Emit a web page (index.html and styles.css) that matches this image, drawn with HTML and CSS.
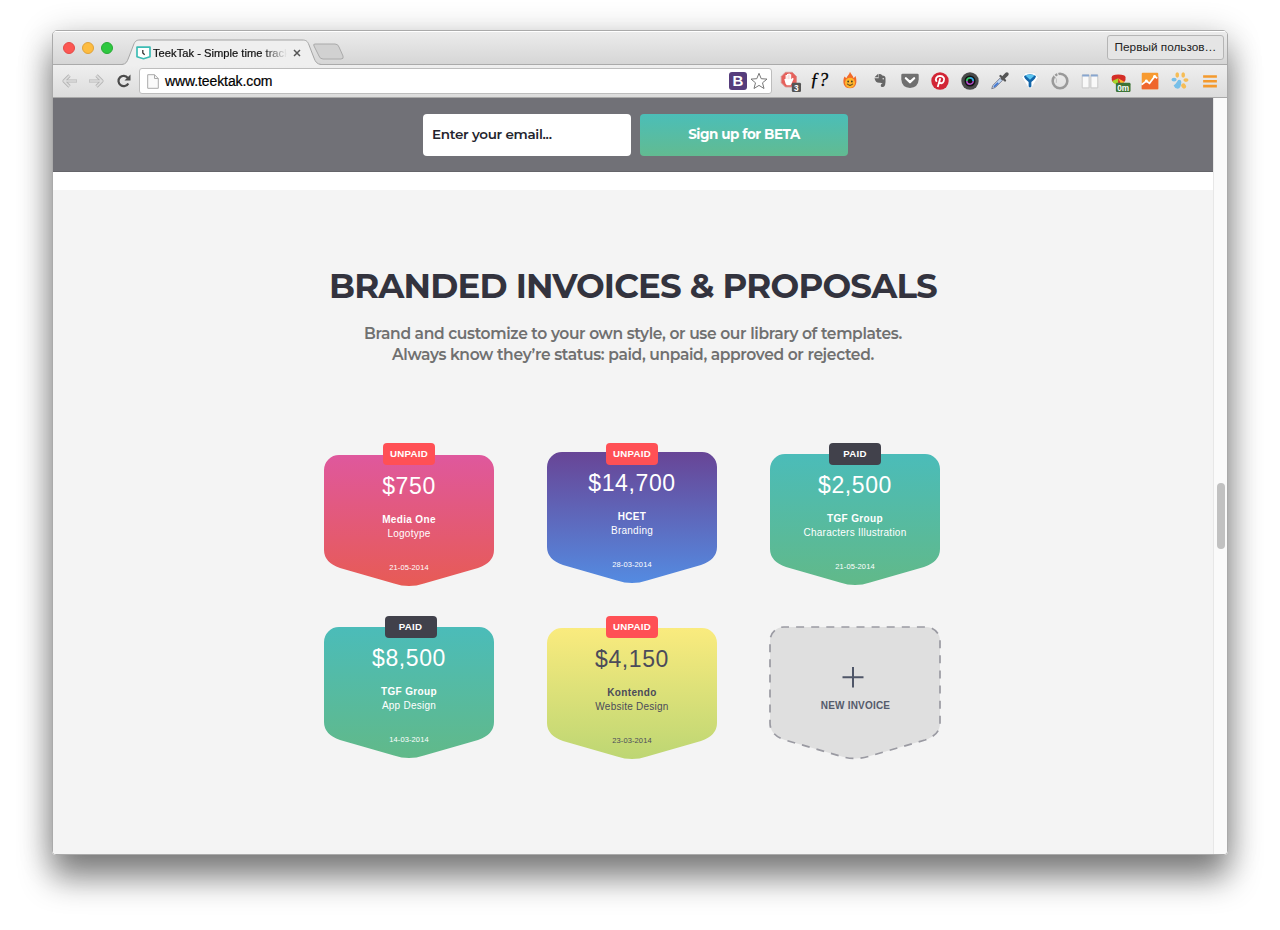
FILE: index.html
```html
<!DOCTYPE html>
<html lang="en">
<head>
<meta charset="utf-8">
<title>TeekTak - Simple time tracking</title>
<link rel="stylesheet" href="styles.css">
</head>
<body>
<div class="window">
  <header class="titlebar">
    <div class="lights"><i class="light close"></i><i class="light minimize"></i><i class="light maximize"></i></div>
    <div class="tab">
      <svg class="tab-shape" width="220" height="26" viewBox="0 0 220 26">
        <path d="M0 25.500C4 25 5 23 6.500 19L11.500 6C13 2 14.500 1 18 1H180C184 1 185.500 2 187 6L192 19C193.500 23 195 25 199 25.500V26H0Z" fill="#efefef"/>
        <path d="M0 25.500C4 25 5 23 6.500 19L11.500 6C13 2 14.500 1 18 1H180C184 1 185.500 2 187 6L192 19C193.500 23 195 25 199 25.500" fill="none" stroke="#a5a5a5"/>
        <path d="M193 5H213Q216 5 217 8L221 17Q222 20 219 20H201Q198 20 197 17L192 7Q191 5 193 5Z" fill="#d1d1d1" stroke="#aaa"/>
      </svg>
      <svg class="favicon" width="15" height="14" viewBox="0 0 15 14"><path d="M1 1.200H14V10.800L7.500 12.700L1 10.800Z" fill="#fff" stroke="#3dbcb4" stroke-width="1.700" stroke-linejoin="round"/><path d="M6.800 4V7L8.700 8.700" fill="none" stroke="#333" stroke-width="1.300"/></svg>
      <span class="tab-title">TeekTak - Simple time track</span>
      <svg class="tab-close" width="8" height="8" viewBox="0 0 8 8"><path d="M1 1L7 7M7 1L1 7" stroke="#555" stroke-width="1.500"/></svg>
    </div>
    <div class="user">Первый пользов…</div>
  </header>

  <div class="toolbar">
    <svg class="nav" width="76" height="18" viewBox="0 0 76 18">
      <g fill="none" stroke="#b5b5b5" stroke-width="3.200" stroke-linejoin="round"><path d="M8.500 3.500L3 9L8.500 14.500M3.500 9H16M35.500 3.500L41 9L35.500 14.500M40.500 9H28"/></g>
      <g fill="none" stroke="#dedede" stroke-width="1.500"><path d="M8.500 3.500L3 9L8.500 14.500M3.500 9H15.500M35.500 3.500L41 9L35.500 14.500M40.500 9H28.500"/></g>
      <path d="M66.800 5.800A5.200 5.200 0 1 0 67.300 11.400" fill="none" stroke="#4b4b4b" stroke-width="2.200"/><path d="M69.500 2.500V8.500H63.500Z" fill="#4b4b4b"/>
    </svg>
    <div class="address">
      <svg width="12" height="15" viewBox="0 0 12 15"><path d="M.700 .700H7.500L11.300 4.500V14.300H.700Z" fill="#fafafa" stroke="#aaa"/><path d="M7.500 .700V4.500H11.300" fill="none" stroke="#aaa"/></svg>
      <span class="url">www.teektak.com</span>
      <b class="bootstrap">B</b>
      <svg width="18" height="18" viewBox="0 0 18 18"><path d="M9 1.300L11.200 6.700L17 7.100L12.500 10.800L14 16.500L9 13.400L4 16.500L5.500 10.800L1 7.100L6.800 6.700Z" fill="#fff" stroke="#777"/></svg>
    </div>
    <div class="extensions">
      <svg viewBox="0 0 24 24"><path d="M7 2.500H14.500L19 7V14L14.500 18.500H7L2.500 14V7Z" fill="#e6605b" stroke="#d9908d"/><path d="M7.200 15L5.800 10L7.200 9.500V5.500H8.700V4.300H10.300V3.800H11.700V4.500H13.300V10L15 8.500L16 9.500L13.300 15.500L12.500 16.500H8.500Z" fill="#fff"/><path d="M8.700 6V10M10.300 5V10M11.800 5.500V10" stroke="#efb0ad" stroke-width=".5"/><rect x="14" y="14" width="10" height="10" rx="1.500" fill="#555"/><text x="19" y="22.500" class="badge-text">3</text></svg>
      <svg viewBox="0 0 24 24"><text x="11" y="17" class="fontface">ƒ?</text></svg>
      <svg viewBox="0 0 24 24"><path d="M12 2C13 5 15.500 6 16 9L18 6.500C20 12 19.500 20 12 20C4.500 20 3.500 12 6 7L8 9C9 6 11.500 5 12 2Z" fill="#f26a28"/><circle cx="12" cy="14" r="5.500" fill="#ffb52e"/><circle cx="10" cy="12.500" r="1" fill="#442"/><circle cx="14" cy="12.500" r="1" fill="#442"/><path d="M8.800 15Q12 18.500 15.200 15" fill="none" stroke="#542" stroke-width="1.200"/></svg>
      <svg viewBox="0 0 24 24"><path d="M6 8L10 4V8ZM10.500 4.500Q13 4 14.500 6Q18 6 18 9Q18.500 18 15.500 18.500Q12.500 19 12.800 16.500Q13 15 15 15Q13 13.500 11 14Q7 14 6 9H10.500Z" fill="#666"/><circle cx="15.500" cy="9.500" r=".8" fill="#eee"/></svg>
      <svg viewBox="0 0 24 24"><path d="M4 4H20Q21.500 4 21.500 5.500V10Q21 19 12 19.500Q3 19 2.500 10V5.500Q2.500 4 4 4Z" fill="#707070"/><path d="M7.500 9L12 13.300L16.500 9" fill="none" stroke="#fff" stroke-width="2.500" stroke-linecap="round" stroke-linejoin="round"/></svg>
      <svg viewBox="0 0 24 24"><circle cx="12" cy="12" r="9.500" fill="#d22535"/><path d="M8.500 12.800C6 9.500 8.500 6.500 12 6.500C16 6.500 17.500 9.500 16 12.500C14.500 15.500 12 14.500 11.500 13M12.300 9L9.500 18.500" fill="none" stroke="#fff" stroke-width="2"/></svg>
      <svg viewBox="0 0 24 24"><circle cx="12" cy="12" r="9.500" fill="#4a4a4a"/><circle cx="12" cy="12" r="6" fill="#111"/><path d="M8.500 12A3.500 3.500 0 0 1 12 8.500" fill="none" stroke="#33c36a" stroke-width="2"/><path d="M12 8.500A3.500 3.500 0 0 1 15.500 12" fill="none" stroke="#32a9e2" stroke-width="2"/><path d="M15.500 12A3.500 3.500 0 0 1 8.500 12" fill="none" stroke="#b04bc8" stroke-width="1.600"/></svg>
      <svg viewBox="0 0 24 24"><path d="M3 20.500L4 17L12 9L14.500 11.500L7 19Z" fill="#bcd6f4" stroke="#778"/><path d="M5.500 18.500L10 14" stroke="#4176cf" stroke-width="2"/><path d="M12.500 6.500L17.500 11.500" stroke="#555" stroke-width="2.500" stroke-linecap="round"/><path d="M15 9L19.500 4.500" stroke="#555" stroke-width="4" stroke-linecap="round"/></svg>
      <svg viewBox="0 0 24 24"><path d="M7 3H17L21 8L13.500 20H10.500L3 8Z" fill="#fff" stroke="#e2e2e2"/><path d="M5.500 6.500Q12 3 18.500 6.500Q18.500 9 13.500 13V18Q12 20 10.500 18V13Q5.500 9 5.500 6.500Z" fill="#1466a9"/><path d="M7 6Q12 4 17 6L12 10.500Z" fill="#5cc5f0"/></svg>
      <svg viewBox="0 0 24 24"><circle cx="12" cy="12" r="8" fill="none" stroke="#999" stroke-width="2.800"/><path d="M5 4.500L9 10M9 2.500L10.500 7" stroke="#e8e8e8" stroke-width="1.200"/><path d="M6.500 7.500Q9 9.500 8 14" fill="none" stroke="#bbb"/></svg>
      <svg viewBox="0 0 24 24"><path d="M3.500 5.500H11V19.500H3.500ZM13 5.500H20.500V19.500H13Z" fill="#f9f9f9" stroke="#c4c4c4"/><path d="M3.500 6H11M13 6H20.500" stroke="#87a6cf" stroke-width="2"/></svg>
      <svg viewBox="0 0 24 24"><path d="M3 8Q3 5 10 5Q18 5 18 8V11Q17 15 10 15Q4 15 3 11Z" fill="#d42e27"/><path d="M10 9L3.500 12Q5 15.500 10 15.500Z" fill="#a6d62b"/><path d="M10 9L13 15L17 13Z" fill="#ffb82c"/><rect x="7.500" y="14" width="16" height="10" rx="1.500" fill="#3c7437"/><text x="15.500" y="22.500" class="badge-text">0m</text></svg>
      <svg viewBox="0 0 24 24"><rect x="3" y="3" width="18" height="18" rx="1" fill="#f79a30"/><path d="M3 17L8 12L11 15L16 10L21 7V21H3Z" fill="#ef672c"/><path d="M3 16L8 12L11.500 14.500L17 7L20 9" fill="none" stroke="#fff" stroke-width="1.800"/><circle cx="8" cy="12" r="1.600" fill="#fff"/><circle cx="17" cy="7" r="1.600" fill="#fff"/></svg>
      <svg viewBox="0 0 24 24"><g fill="#f6bd56"><ellipse cx="9" cy="5.500" rx="2" ry="3"/><ellipse cx="15.500" cy="5.500" rx="2" ry="3"/><ellipse cx="18.500" cy="11" rx="2.800" ry="2"/><ellipse cx="16" cy="17.500" rx="2.400" ry="3" transform="rotate(-35 16 17.500)"/></g><g fill="#77bfe8"><ellipse cx="5.500" cy="10.500" rx="2.800" ry="2"/><path d="M10 11Q13 10 13.500 13Q13 20 9.500 20.500Q6 20 5 17Q7 16 10 11Z"/></g></svg>
      <svg viewBox="0 0 24 24"><path d="M4.500 7H19.500M4.500 12.300H19.500M4.500 17.600H19.500" stroke="#f49a2e" stroke-width="2.800"/></svg>
    </div>
  </div>

  <div class="viewport">
    <main class="page">
      <form class="signup">
        <div class="email">Enter your email...</div>
        <div class="signup-button">Sign up for BETA</div>
      </form>
      <section class="invoices">
        <h1>BRANDED INVOICES &amp; PROPOSALS</h1>
        <p class="lead">Brand and customize to your own style, or use our library of templates.<br>Always know they’re status: paid, unpaid, approved or rejected.</p>
        <div class="cards">
          <article class="card pink"><span class="status">UNPAID</span><div class="shape"><div class="price">$750</div><div class="client">Media One</div><div class="job">Logotype</div><div class="date">21-05-2014</div></div></article>
          <article class="card purple"><span class="status">UNPAID</span><div class="shape"><div class="price">$14,700</div><div class="client">HCET</div><div class="job">Branding</div><div class="date">28-03-2014</div></div></article>
          <article class="card teal"><span class="status paid">PAID</span><div class="shape"><div class="price">$2,500</div><div class="client">TGF Group</div><div class="job">Characters Illustration</div><div class="date">21-05-2014</div></div></article>
          <article class="card teal lower"><span class="status paid">PAID</span><div class="shape"><div class="price">$8,500</div><div class="client">TGF Group</div><div class="job">App Design</div><div class="date">14-03-2014</div></div></article>
          <article class="card lime"><span class="status">UNPAID</span><div class="shape"><div class="price">$4,150</div><div class="client">Kontendo</div><div class="job">Website Design</div><div class="date">23-03-2014</div></div></article>
          <article class="card new">
            <svg width="172" height="134" viewBox="0 0 172 134">
              <path d="M15 1H157A14 14 0 0 1 171 15V97Q171 109 156 114L101 130Q86 135 71 130L16 114Q1 109 1 97V15A14 14 0 0 1 15 1Z" fill="#dfdfdf" stroke="#9a9aa2" stroke-width="1.700" stroke-dasharray="8 7.100" stroke-dashoffset="3"/>
              <path d="M84 41V61.500M73.500 51.200H94.500" stroke="#4f5668" stroke-width="2"/>
            </svg>
            <div class="new-label">NEW INVOICE</div>
          </article>
        </div>
      </section>
    </main>
    <aside class="scrollbar"><i class="thumb"></i></aside>
  </div>
</div>
</body>
</html>
```
FILE: styles.css
```css
* { box-sizing: border-box; }
body { margin: 0; width: 1280px; height: 930px; overflow: hidden; background: #fff; font-family: "Liberation Sans", Arial, sans-serif; }
.window { width: 1176px; height: 825px; margin: 30px 0 0 52px; display: flex; flex-direction: column; border-radius: 5px 5px 4px 4px; overflow: hidden; border: 1px solid #aaa; box-shadow: 0 24px 32px rgba(0,0,0,.42), 0 6px 34px rgba(0,0,0,.24); }

.titlebar { height: 34px; flex: none; display: flex; align-items: flex-end; background: linear-gradient(#ececec, #d6d6d6); border-bottom: 1px solid #aaa; box-shadow: inset 0 1px #fff; }
.lights { display: flex; gap: 7px; padding: 0 0 10px 10px; width: 69px; }
.light { width: 12px; height: 12px; border-radius: 50%; }
.close { background: #fc5753; border: 1px solid #e34b48; }
.minimize { background: #fdbc40; border: 1px solid #dfa239; }
.maximize { background: #2ec840; border: 1px solid #27aa35; }
.tab { position: relative; display: flex; align-items: center; width: 225px; height: 25px; padding-left: 14px; margin-bottom: -1px; }
.tab-shape { position: absolute; left: 0; bottom: 0; overflow: visible; }
.favicon { position: relative; }
.tab-title { position: relative; width: 134px; margin-left: 2px; overflow: hidden; white-space: nowrap; font-size: 11.200px; line-height: 14px; color: #111; -webkit-text-stroke: .2px #111; -webkit-mask-image: linear-gradient(90deg, #000 82%, transparent); mask-image: linear-gradient(90deg, #000 82%, transparent); }
.tab-close { position: relative; margin-left: 6px; }
.user { width: 117px; height: 25px; margin: 0 3px 4px auto; border: 1px solid #b5b5b5; border-radius: 3px; background: #e5e5e5; text-align: center; font-size: 11.800px; line-height: 23px; color: #222; white-space: nowrap; }

.toolbar { height: 33px; flex: none; display: flex; align-items: center; padding-left: 8px; background: linear-gradient(#efefef, #dcdcdc); border-bottom: 1px solid #a9a9a9; }
.nav { flex: none; }
.address { display: flex; align-items: center; width: 633px; height: 26px; margin-left: 2px; padding: 0 3px 0 7px; background: #fff; border: 1px solid #bdbdbd; border-radius: 3px; }
.url { margin: 0 auto 0 6px; font-size: 14px; letter-spacing: -.1px; color: #000; -webkit-text-stroke: .2px #000; }
.bootstrap { width: 18px; height: 18px; margin-right: 3px; border-radius: 3px; background: #563d7c; color: #fff; font-size: 15px; line-height: 18px; text-align: center; }
.extensions { display: flex; gap: 6px; margin-left: 6px; }
.extensions svg { width: 24px; height: 24px; padding: 1px; overflow: visible; }
.badge-text { fill: #fff; font: bold 9px "Liberation Sans", sans-serif; text-anchor: middle; }
.fontface { fill: #000; stroke: #000; stroke-width: .3px; font: italic 20px "Liberation Serif", serif; text-anchor: middle; }

.viewport { flex: 1; display: flex; min-height: 0; }
.page { width: 1160px; background: #fff; }
.scrollbar { flex: 1; padding: 385px 1px 0 3px; background: #fafafa; border-left: 1px solid #e7e7e7; }
.thumb { display: block; width: 8px; height: 66px; border-radius: 4px; background: #c1c1c1; }
.signup { height: 74px; margin-bottom: 18px; display: flex; gap: 9px; padding: 15.500px 0 0 370px; background: #717177; border-bottom: 1px solid #65656a; font-family: Montserrat, Inter, sans-serif; }
.email, .signup-button { width: 208px; height: 42px; border-radius: 4px; font-size: 13.500px; line-height: 41px; }
.email { padding-left: 9px; background: #fff; color: #24242d; font-weight: 600; letter-spacing: -.28px; }
.signup-button { text-align: center; color: #fff; font-weight: 700; letter-spacing: -.45px; background: linear-gradient(#4bbeb8, #62bb91); }

.invoices { height: 664px; padding-top: 75px; background: #f4f4f4; }
h1 { margin: 0; text-align: center; font: 700 34px/42px Montserrat, Inter, sans-serif; letter-spacing: -.8px; color: #33333e; white-space: nowrap; }
.lead { margin: 16px 0 0; text-align: center; font: 600 15.500px/21px Montserrat, Inter, sans-serif; letter-spacing: -.35px; color: #707070; }
.cards { display: grid; grid-template-columns: repeat(3, 170px); grid-template-rows: 172.500px 150px; column-gap: 53px; padding: 78px 0 0 271px; }
.card { position: relative; padding-top: 12px; color: #fff; text-align: center; }
.card.purple { padding-top: 9px; }
.card.teal { padding-top: 11px; }
.card.lower { padding-top: 11.500px; }
.card.lime { padding-top: 12.500px; color: #4b4b5a; }
.status { position: absolute; top: 0; left: 59px; width: 52px; height: 22px; border-radius: 4px; background: #ff5055; color: #fff; font-size: 9.700px; font-weight: 700; line-height: 22px; letter-spacing: .25px; z-index: 1; }
.status.paid { background: #41414b; }
.lower .status { left: 60.500px; }
.shape { height: 131px; padding-top: 16px; clip-path: path("M15 0H155A15 15 0 0 1 170 15V95Q170 107.500 154 113L100 128.500Q85 133.500 70 128.500L16 113Q0 107.500 0 95V15A15 15 0 0 1 15 0Z"); }
.pink .shape { background: linear-gradient(#df589d, #e75b55); }
.purple .shape { background: linear-gradient(#684596, #548be1); }
.teal .shape { background: linear-gradient(#4bbcb9, #61b989); }
.lime .shape { background: linear-gradient(#faeb7e, #bdd673); }
.price { font-size: 23px; line-height: 30px; letter-spacing: .6px; }
.client { margin-top: 12px; font-size: 10px; font-weight: 700; line-height: 14px; letter-spacing: .35px; }
.job { font-size: 10px; line-height: 14px; letter-spacing: .25px; }
.date { margin-top: 21px; font-size: 7.500px; line-height: 12px; letter-spacing: .1px; }
.card.new { padding-top: 10.500px; }
.new svg { display: block; margin-left: -1px; }
.new-label { position: absolute; top: 83px; left: 0; width: 171px; text-align: center; color: #555b6b; font-size: 10px; font-weight: 700; line-height: 14px; letter-spacing: .2px; }
```
